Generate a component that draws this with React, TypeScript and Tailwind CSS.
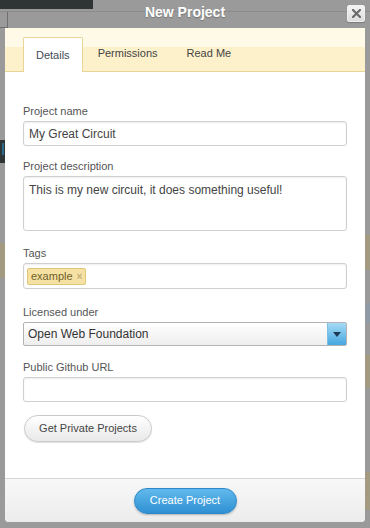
import React from "react";

function Label({ children, mt }: { children: React.ReactNode; mt: string }) {
  return (
    <div className={`${mt} text-[11px] leading-[14px] text-[#555] mb-[3px]`}>{children}</div>
  );
}

export default function App() {
  return (
    <div className="relative w-[370px] h-[528px] bg-[#9a9a9a] overflow-hidden font-['Liberation_Sans',Arial,sans-serif]">
      {/* dimmed page behind the dialog */}
      <div className="absolute left-0 top-0 w-[93px] h-[9px] bg-[#2f3434]" />
      <div className="absolute left-0 top-[11px] w-[370px] h-px bg-[#8c8c8c]" />
      <div className="absolute left-0 top-[12px] w-[8px] h-[16px] border-r border-b border-[#6f6f6f]" />
      <div className="absolute left-0 top-[140px] w-[5px] h-[23px] bg-[#2f3434]" />
      <div className="absolute left-[2px] top-[143px] w-[2px] h-[12px] bg-[#2a6a8a]" />
      <div className="absolute left-0 top-[243px] w-[5px] h-[35px] bg-[#a39a82]" />
      <div className="absolute right-0 top-[235px] w-[5px] h-[35px] bg-[#a39a82]" />
      <div className="absolute right-0 top-[303px] w-[4px] h-[20px] bg-[#8e9aa6]" />
      <div className="absolute right-0 top-[355px] w-[5px] h-[33px] bg-[#a39a82]" />
      <div className="absolute right-0 top-[472px] w-[5px] h-[38px] bg-[#a39a82]" />

      <div className="relative flex flex-col h-full">
        <div className="relative h-[28px] flex items-center justify-center pb-[4px]">
          <span className="text-white font-bold text-[14px] leading-[16px] [text-shadow:0_1px_1px_rgba(0,0,0,0.25)]">
            New Project
          </span>
          <div className="absolute right-[5px] top-[5px] w-[18px] h-[17px] bg-[linear-gradient(#f4f4f4,#dcdcdc)] border border-[#f0f0f0] rounded-[2px] flex items-center justify-center shadow-[0_1px_1px_rgba(0,0,0,0.2)]">
            <svg width="9" height="9" viewBox="0 0 9 9">
              <path d="M1 1L8 8M8 1L1 8" stroke="#6a6a6a" strokeWidth="2.2" strokeLinecap="square" />
            </svg>
          </div>
        </div>

        <div className="ml-[5px] w-[360px] h-[494px] flex flex-col bg-white rounded-b-[4px] overflow-hidden">
          {/* tabs */}
          <div className="h-[44px] flex items-end px-[18px] border-b border-[#e6d595] bg-[linear-gradient(#fff9e8_0%,#fff9e8_45%,#fdf1cc_45%,#fdf1cc_100%)]">
            <div className="h-[35px] -mb-px px-[12px] flex items-center bg-white border border-b-0 border-[#e6d595] rounded-t-[2px] text-[11px] text-[#3f4a55]">
              Details
            </div>
            <div className="h-[35px] px-[15px] flex items-center text-[11px] text-[#444]">Permissions</div>
            <div className="h-[35px] px-[14px] flex items-center text-[11px] text-[#444]">Read Me</div>
          </div>

          {/* body */}
          <div className="flex-1 px-[18px] pt-[32px] flex flex-col">
            <Label mt="mt-0">Project name</Label>
            <div className="h-[25px] border border-[#cfcfcf] rounded-[3px] px-[5px] flex items-center text-[12px] text-[#444] shadow-[inset_0_1px_2px_rgba(0,0,0,0.07)]">
              My Great Circuit
            </div>

            <Label mt="mt-[13px]">Project description</Label>
            <div className="h-[55px] border border-[#cfcfcf] rounded-[3px] px-[5px] pt-[6px] text-[12px] leading-[15px] text-[#444] shadow-[inset_0_1px_2px_rgba(0,0,0,0.07)]">
              This is my new circuit, it does something useful!
            </div>

            <Label mt="mt-[15px]">Tags</Label>
            <div className="h-[26px] border border-[#cfcfcf] rounded-[3px] pl-[3px] flex items-center shadow-[inset_0_1px_2px_rgba(0,0,0,0.07)]">
              <div className="h-[17px] px-[3px] flex items-center gap-[4px] bg-[#f5e1a3] border border-[#e0c677] rounded-[2px] text-[11px] text-[#6e5f28]">
                <span>example</span>
                <span className="text-[10px] text-[#c2b07a] font-bold">×</span>
              </div>
            </div>

            <Label mt="mt-[16px]">Licensed under</Label>
            <div className="h-[24px] border border-[#b3b3b3] rounded-[2px] flex bg-[linear-gradient(#ffffff,#eeeeee)] overflow-hidden">
              <div className="flex-1 pl-[4px] flex items-center text-[12px] text-[#333]">Open Web Foundation</div>
              <div className="w-[19px] h-full flex items-center justify-center bg-[linear-gradient(#a6dbf5,#45a7df)] border-l border-[#7fbde3]">
                <svg width="8" height="5" viewBox="0 0 8 5">
                  <path d="M0 0H8L4 5Z" fill="#1d3a55" />
                </svg>
              </div>
            </div>

            <Label mt="mt-[14px]">Public Github URL</Label>
            <div className="h-[25px] border border-[#cfcfcf] rounded-[3px] shadow-[inset_0_1px_2px_rgba(0,0,0,0.07)]" />

            <div className="mt-[13px] ml-px w-[128px] h-[27px] rounded-full border border-[#c9c9c9] bg-[linear-gradient(#ffffff,#e9e9e9)] shadow-[0_1px_1px_rgba(0,0,0,0.12)] flex items-center justify-center text-[11px] text-[#444]">
              Get Private Projects
            </div>
          </div>

          {/* footer */}
          <div className="h-[44px] border-t border-[#d6d6d6] bg-[linear-gradient(#f8f8f8,#ececec)] flex items-center justify-center">
            <div className="w-[103px] h-[26px] rounded-full border border-[#2b87c9] bg-[linear-gradient(#62b9ec,#2f90d3)] shadow-[0_1px_2px_rgba(0,0,0,0.25)] flex items-center justify-center text-[11px] text-white">
              Create Project
            </div>
          </div>
        </div>
      </div>
    </div>
  );
}
